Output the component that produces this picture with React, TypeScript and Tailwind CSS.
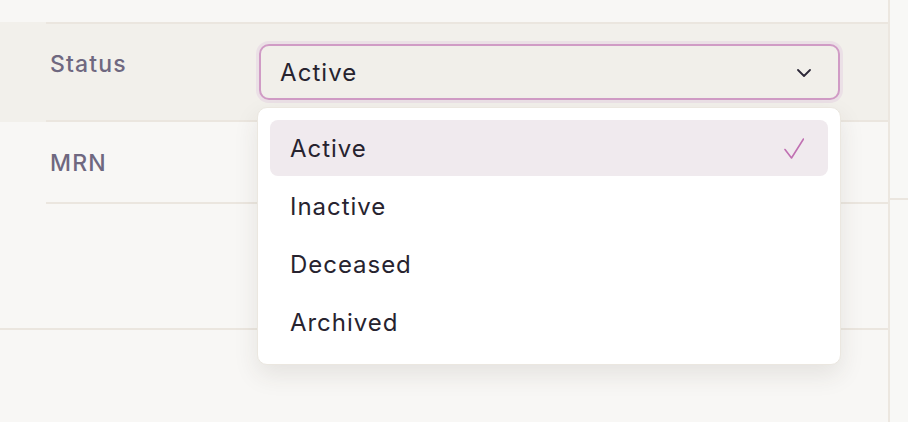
import React from 'react';

const options = ['Active', 'Inactive', 'Deceased', 'Archived'];

const Chevron = () => (
  <svg width="14" height="8" viewBox="0 0 14 8" fill="none">
    <path d="M1 1L7 7L13 1" stroke="#2d2838" strokeWidth="1.8" strokeLinecap="round" strokeLinejoin="round" />
  </svg>
);

const Check = () => (
  <svg width="20" height="21" viewBox="0 0 20 21" fill="none">
    <path d="M1 11.5L7.5 20L19.5 1" stroke="#c070b2" strokeWidth="1.6" strokeLinecap="round" strokeLinejoin="round" />
  </svg>
);

export default function App() {
  const selected = 'Active';

  return (
    <div className="flex w-[908px] h-[422px] overflow-hidden bg-[#f8f7f5] font-[Inter,sans-serif] text-[#27232f]">
      {/* main panel */}
      <div className="w-[890px] h-full border-r-2 border-[#ece7e0] pt-[22px]">
        <div className="bg-[#f2f0eb] pl-[46px]">
          <div className="flex h-[100px] border-y-2 border-[#ebe6df]">
            <div className="w-[213px] pl-[4px] pt-[23px] text-[23px] font-medium tracking-[0.05em] text-[#6f6880]">
              Status
            </div>
            <div className="relative flex-1 pt-[20px] pr-[48px]">
              <button className="flex h-[56px] w-full items-center justify-between rounded-[10px] border-2 border-[#d09bc5] bg-[#f1efea] pl-[19px] pr-[27px] pt-[1px] text-[24px] tracking-[0.045em] shadow-[0_0_0_3px_#ebe0e6]">
                <span>{selected}</span>
                <Chevron />
              </button>

              {/* open menu */}
              <div className="absolute left-[-2px] top-[83px] z-10 w-[584px] rounded-[10px] border border-[#ebe7e0] bg-white px-[12px] pt-[12px] pb-[14px] shadow-[0_10px_24px_rgba(60,50,40,0.10)]">
                <div className="flex flex-col gap-[2px]">
                  {options.map((opt) => (
                    <div
                      key={opt}
                      className={
                        opt === selected
                          ? 'flex h-[56px] items-center justify-between rounded-[8px] bg-[#f0eaee] pl-[20px] pr-[24px] pt-[1px] text-[24px] tracking-[0.04em]'
                          : 'flex h-[56px] items-center justify-between rounded-[8px] pl-[20px] pr-[24px] pt-[1px] text-[24px] tracking-[0.04em]'
                      }
                    >
                      <span>{opt}</span>
                      {opt === selected && <Check />}
                    </div>
                  ))}
                </div>
              </div>
            </div>
          </div>
        </div>

        <div className="pl-[46px]">
          <div className="h-[82px] border-b-2 border-[#ebe6df] pl-[4px] pt-[24px] text-[23px] font-medium tracking-[0.05em] text-[#6f6880]">
            MRN
          </div>
        </div>

        <div className="h-[126px] border-b-2 border-[#ebe6df]" />
      </div>

      {/* side panel */}
      <div className="flex-1 bg-[#f8f8f6]">
        <div className="h-[200px] border-b-2 border-[#ebe6df]" />
      </div>
    </div>
  );
}
